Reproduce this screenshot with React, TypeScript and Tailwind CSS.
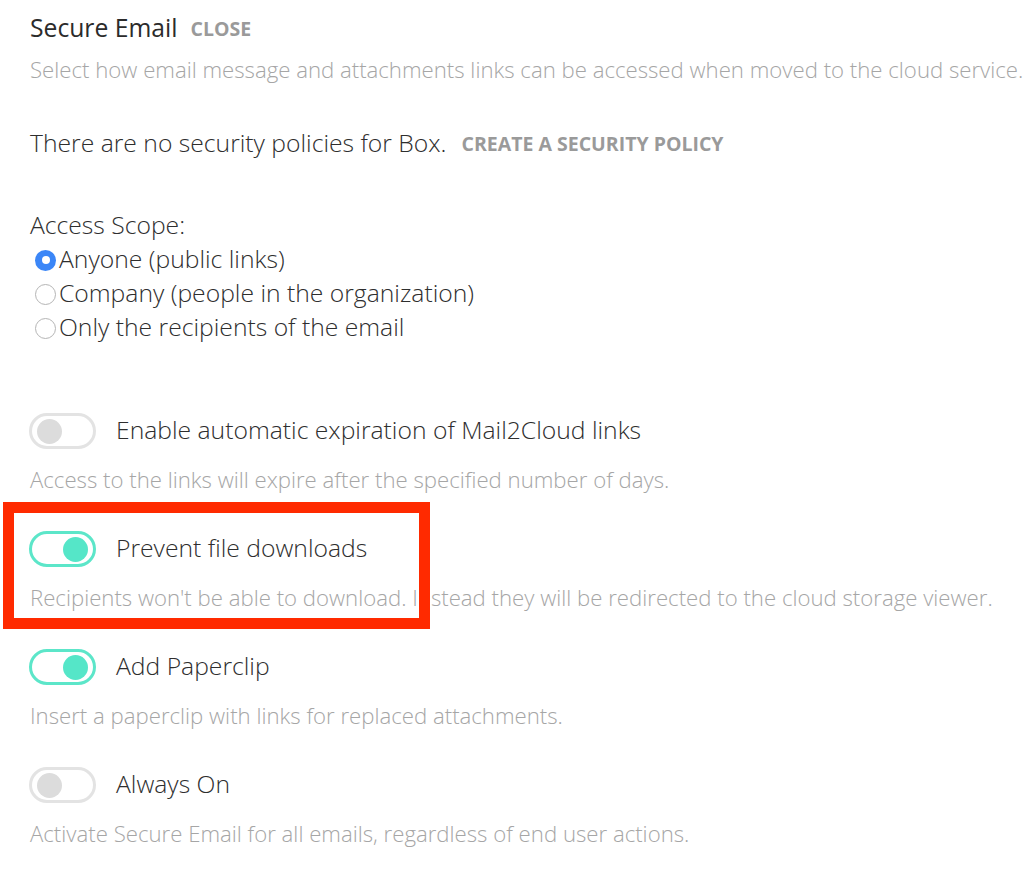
import React from "react";

function Toggle({ on }: { on: boolean }) {
  return (
    <div
      className={
        "ml-[-1px] flex h-[36px] w-[67px] shrink-0 items-center rounded-full border-[3px] px-[5px] " +
        (on ? "justify-end border-[#5ce6c9] bg-white" : "justify-start border-[#e3e3e3] bg-white")
      }
    >
      <div className={"h-[25px] w-[25px] rounded-full " + (on ? "bg-[#55e6c8]" : "bg-[#dcdcdc]")} />
    </div>
  );
}

function Section({ on, label, desc, first }: { on: boolean; label: string; desc: string; first?: boolean }) {
  return (
    <div className={first ? "mt-[68px]" : "mt-[37px]"}>
      <div className="flex h-[36px] items-center gap-[20px]">
        <Toggle on={on} />
        <span className="mb-[2px] whitespace-nowrap text-[24.7px] font-light text-[#2e2e2e]">{label}</span>
      </div>
      <div className="mt-[17px] flex h-[28px] items-center whitespace-nowrap text-[22.2px] font-light text-[#a6a6a6]">{desc}</div>
    </div>
  );
}

function Radio({ checked, label }: { checked: boolean; label: string }) {
  return (
    <div className="flex h-[34px] items-center">
      <div className="ml-[5px] mr-[3px] flex h-[21px] w-[21px] shrink-0 items-center justify-center">
        {checked ? (
          <div className="flex h-[21px] w-[21px] items-center justify-center rounded-full bg-[#3b86f7]">
            <div className="h-[8px] w-[8px] rounded-full bg-white" />
          </div>
        ) : (
          <div className="h-[21px] w-[21px] rounded-full border border-[#b5b5b5] bg-white" />
        )}
      </div>
      <span className="mb-[2px] whitespace-nowrap text-[24.7px] font-light text-[#2e2e2e]">{label}</span>
    </div>
  );
}

export default function App() {
  return (
    <div
      className="relative h-[882px] w-[1024px] overflow-hidden bg-white pl-[30px]"
      style={{ fontFamily: '"Open Sans", "Noto Sans", sans-serif' }}
    >
      <div className="flex h-[56px] items-center gap-[13px]">
        <span className="whitespace-nowrap text-[24.7px] text-[#2b2b2b]">Secure Email</span>
        <span className="mt-[2px] text-[19.5px] font-bold text-[#9a9a9a]">CLOSE</span>
      </div>
      <div className="flex h-[28px] items-center whitespace-nowrap text-[22.2px] font-light text-[#a6a6a6]">
        Select how email message and attachments links can be accessed when moved to the cloud service.
      </div>
      <div className="mt-[45px] flex h-[28px] items-center gap-[15px]">
        <span className="whitespace-nowrap text-[24.7px] font-light text-[#2e2e2e]">There are no security policies for Box.</span>
        <span className="mt-[2px] whitespace-nowrap text-[19.5px] font-bold text-[#9a9a9a]">CREATE A SECURITY POLICY</span>
      </div>
      <div className="mt-[54px] flex h-[28px] items-center text-[24.7px] font-light text-[#2e2e2e]">Access Scope:</div>
      <div className="mt-[4px]">
        <Radio checked label="Anyone (public links)" />
        <Radio checked={false} label="Company (people in the organization)" />
        <Radio checked={false} label="Only the recipients of the email" />
      </div>
      <Section first on={false} label="Enable automatic expiration of Mail2Cloud links" desc="Access to the links will expire after the specified number of days." />
      <Section on label="Prevent file downloads" desc="Recipients won't be able to download. Instead they will be redirected to the cloud storage viewer." />
      <Section on label="Add Paperclip" desc="Insert a paperclip with links for replaced attachments." />
      <Section on={false} label="Always On" desc="Activate Secure Email for all emails, regardless of end user actions." />

      <div className="absolute left-[3px] top-[502px] h-[127px] w-[427px] border-[11px] border-[#ff2a00]" />
    </div>
  );
}
